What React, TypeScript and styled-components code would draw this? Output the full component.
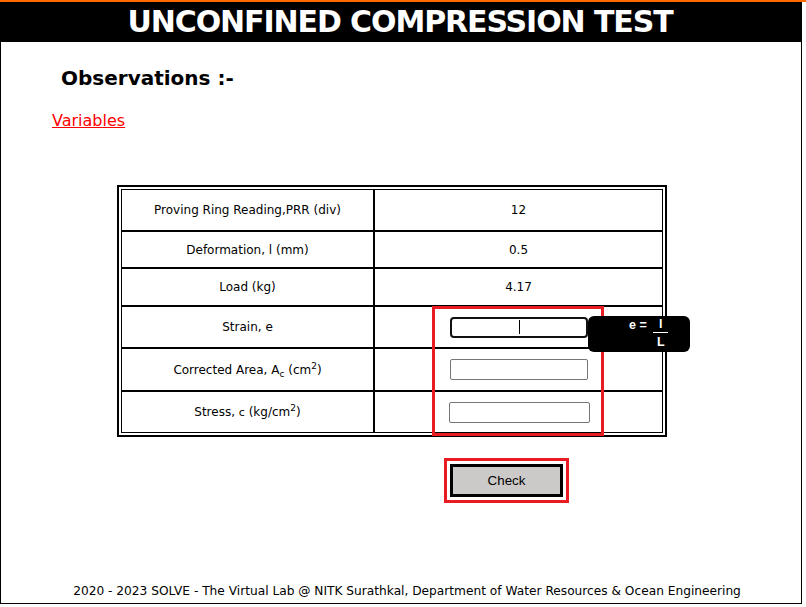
import React from "react";
import styled, { createGlobalStyle } from "styled-components";

const GlobalStyle = createGlobalStyle`
  html, body {
    margin: 0;
    padding: 0;
    background: #ffffff;
  }
  body {
    font-family: "DejaVu Sans", Verdana, sans-serif;
    color: #000000;
  }
`;

const Page = styled.div`
  width: 806px;
  border-top: 2px solid #ff6a00;
`;

const Frame = styled.div`
  width: 802px;
  height: 602px;
  box-sizing: border-box;
  border: 1px solid #000000;
  border-top: none;
  display: flex;
  flex-direction: column;
`;

const Header = styled.header`
  height: 40px;
  background: #000000;
  display: flex;
  align-items: center;
  justify-content: center;
`;

const Title = styled.h1`
  margin: 0 0 0 -2px;
  color: #ffffff;
  font-family: "DejaVu Sans", Verdana, sans-serif;
  font-weight: bold;
  font-size: 30px;
  line-height: 40px;
  letter-spacing: -1.1px;
`;

const Heading = styled.h2`
  margin: 24px 0 0 60px;
  font-family: "DejaVu Sans", Verdana, sans-serif;
  font-weight: bold;
  font-size: 20px;
  line-height: 24px;
`;

const LinkRow = styled.div`
  margin: 21px 0 0 51px;
  font-size: 16px;
  line-height: 19px;
`;

const VarLink = styled.a`
  color: #ff0000;
  text-decoration: underline;
`;

const TableWrap = styled.div`
  position: relative;
  margin: 55px 0 0 116px;
  width: 550px;
  box-sizing: border-box;
  border: 2px solid #000000;
  padding: 2px;
`;

const Grid = styled.div`
  display: grid;
  grid-template-columns: 253px 289px;
  grid-template-rows: 42px 37px 38px 42px 43px 42px;
`;

const Cell = styled.div`
  box-sizing: border-box;
  border: 1px solid #000000;
  display: flex;
  align-items: center;
  justify-content: center;
  font-size: 12px;
  line-height: 14px;
  color: #000000;
`;

const Sub = styled.sub`
  font-size: 9px;
  vertical-align: -3px;
  line-height: 0;
`;

const Sup = styled.sup`
  font-size: 9px;
  vertical-align: 5px;
  line-height: 0;
`;

const SmallSymbol = styled.span`
  font-size: 11px;
`;

const InputWrap = styled.span`
  position: relative;
  display: inline-block;
`;

const TextInput = styled.input<{ $w?: number; $focused?: boolean }>`
  display: block;
  width: ${(p) => p.$w ?? 138}px;
  height: 21px;
  box-sizing: border-box;
  padding: 1px 2px;
  margin: 0 0 0 ${(p) => ((p.$w ?? 138) > 138 ? 2 : 0)}px;
  background: #ffffff;
  border: ${(p) => (p.$focused ? "2px solid #101010" : "1px solid #767676")};
  border-radius: ${(p) => (p.$focused ? "4px" : "2px")};
  font-family: "Liberation Sans", Arial, sans-serif;
  font-size: 13px;
  text-align: center;
  outline: none;
`;

const Caret = styled.span`
  position: absolute;
  left: 69px;
  top: 3px;
  width: 1px;
  height: 14px;
  background: #000000;
`;

const Highlight = styled.div`
  position: absolute;
  left: 313px;
  top: 119px;
  width: 172px;
  height: 130px;
  box-sizing: border-box;
  border: 3px solid #e91c24;
  pointer-events: none;
`;

const Tooltip = styled.div`
  position: absolute;
  left: 469px;
  top: 129px;
  width: 102px;
  height: 36px;
  box-sizing: border-box;
  background: #000000;
  border-radius: 6px;
  padding: 1px 0 0 41px;
  display: flex;
  align-items: flex-start;
  color: #ffffff;
  font-family: "Liberation Sans", Arial, sans-serif;
  font-weight: bold;
  font-size: 12.5px;
  line-height: 13px;
`;

const Lhs = styled.span`
  padding-top: 2px;
  white-space: pre;
`;

const Fraction = styled.span`
  margin-left: 3px;
  width: 15px;
  display: flex;
  flex-direction: column;
  align-items: center;
`;

const Num = styled.span`
  width: 15px;
  text-align: center;
  padding: 1px 0 1px;
  border-bottom: 1px solid #ffffff;
`;

const Den = styled.span`
  padding-top: 3px;
`;

const CheckRow = styled.div`
  margin-top: 27px;
  padding-left: 449px;
`;

const CheckButton = styled.button`
  display: block;
  width: 113px;
  height: 33px;
  box-sizing: border-box;
  padding: 0;
  background: #ccc9c9;
  border: 3px solid #000000;
  outline: 3px solid #e91c24;
  outline-offset: 3px;
  font-family: "Liberation Sans", Arial, sans-serif;
  font-size: 13.33px;
  color: #000000;
`;

const Footer = styled.footer`
  margin-top: auto;
  padding: 0 0 5px 12px;
  text-align: center;
  font-size: 12.2px;
  line-height: 14px;
`;

export default function App() {
  return (
    <>
      <GlobalStyle />
      <Page>
        <Frame>
          <Header>
            <Title>UNCONFINED COMPRESSION TEST</Title>
          </Header>
          <Heading>Observations :-</Heading>
          <LinkRow>
            <VarLink href="#">Variables</VarLink>
          </LinkRow>
          <TableWrap>
            <Grid>
              <Cell>Proving Ring Reading,PRR (div)</Cell>
              <Cell>12</Cell>
              <Cell>Deformation, l (mm)</Cell>
              <Cell>0.5</Cell>
              <Cell>Load (kg)</Cell>
              <Cell>4.17</Cell>
              <Cell>Strain, e</Cell>
              <Cell>
                <InputWrap>
                  <TextInput $focused aria-label="Strain" />
                  <Caret />
                </InputWrap>
              </Cell>
              <Cell>
                <span>
                  Corrected Area, A<Sub>c</Sub> (cm<Sup>2</Sup>)
                </span>
              </Cell>
              <Cell>
                <TextInput aria-label="Corrected Area" />
              </Cell>
              <Cell>
                <span>
                  Stress, <SmallSymbol>c</SmallSymbol> (kg/cm<Sup>2</Sup>)
                </span>
              </Cell>
              <Cell>
                <TextInput $w={141} aria-label="Stress" />
              </Cell>
            </Grid>
            <Highlight />
            <Tooltip>
              <Lhs>e = </Lhs>
              <Fraction>
                <Num>l</Num>
                <Den>L</Den>
              </Fraction>
            </Tooltip>
          </TableWrap>
          <CheckRow>
            <CheckButton>Check</CheckButton>
          </CheckRow>
          <Footer>
            2020 - 2023 SOLVE - The Virtual Lab @ NITK Surathkal, Department of Water Resources &amp; Ocean Engineering
          </Footer>
        </Frame>
      </Page>
    </>
  );
}
